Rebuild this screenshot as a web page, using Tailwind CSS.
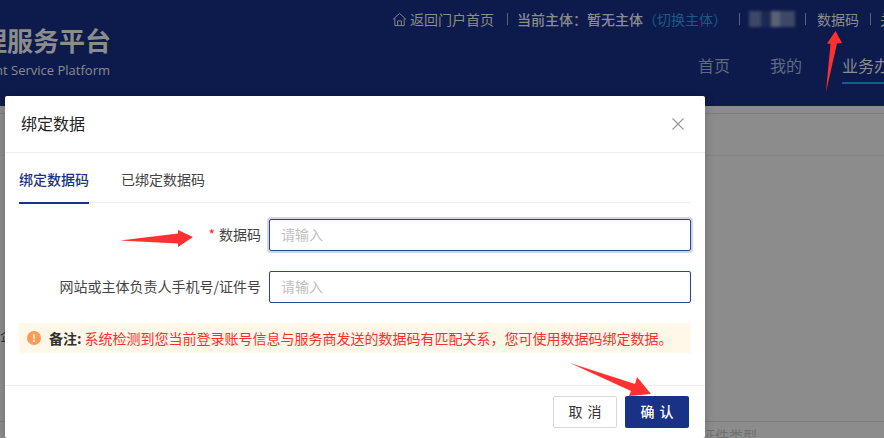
<!DOCTYPE html>
<html lang="zh-CN">
<head>
    <meta charset="UTF-8">
    <title>绑定数据</title>
    <script src="https://cdn.jsdelivr.net/npm/@tailwindcss/browser@4"></script>
</head>
<body class="font-['Noto_Sans_CJK_SC','Noto_Sans',sans-serif] bg-[#8c8c8c]">
<div class="relative w-[884px] h-[438px] overflow-hidden">

    <!-- Page behind the mask -->
    <header class="flex h-[106px] bg-[#0d1b4c] text-[#8c8c8c]">
        <div class="w-[111px] shrink-0 pt-[22px] flex flex-col items-end overflow-hidden">
            <div class="text-[26px] leading-[36px] font-bold whitespace-nowrap">理服务平台</div>
            <div class="mt-[3px] pr-[1px] text-[13px] leading-[18px] whitespace-nowrap font-['Open_Sans',sans-serif]">nt Service Platform</div>
        </div>
        <div class="ml-[281px] grow min-w-0">
            <div class="flex items-center h-[20px] mt-[9px] text-[14px] leading-[20px] whitespace-nowrap">
                <svg class="w-[15px] h-[15px] mr-[3px] shrink-0" viewBox="0 0 16 16" fill="none" stroke="#8c8c8c" stroke-width="1">
                    <path d="M1 8 8 1.5 15 8M3 7v7.5h10V7M6 14.5V9.5h4v5"/>
                </svg>
                <span class="shrink-0">返回门户首页</span>
                <span class="shrink-0 w-px h-[12px] bg-[#5a6078] ml-[13px] mr-[9px]"></span>
                <span class="shrink-0 font-medium">当前主体：暂无主体</span>
                <span class="shrink-0 text-[#1a5a8a]">（切换主体）</span>
                <span class="shrink-0 w-px h-[12px] bg-[#5a6078] ml-[12px] mr-[9px]"></span>
                <span class="shrink-0 flex w-[46px] h-[16px] blur-[1.5px]">
                    <span class="w-[12px] bg-[#3d4767]"></span>
                    <span class="w-[10px] bg-[#1c2955]"></span>
                    <span class="w-[9px] bg-[#5c6276]"></span>
                    <span class="w-[15px] bg-[#3d4767]"></span>
                </span>
                <span class="shrink-0 w-px h-[12px] bg-[#5a6078] ml-[10px] mr-[11px]"></span>
                <span class="shrink-0">数据码</span>
                <span class="shrink-0 w-px h-[12px] bg-[#5a6078] ml-[11px] mr-[9px]"></span>
                <span class="shrink-0">关</span>
            </div>
            <nav class="flex mt-[24px] ml-[306px] text-[16px] leading-[24px] whitespace-nowrap">
                <span class="mr-[40px] text-[#5f6a7f]">首页</span>
                <span class="mr-[40px] text-[#5f6a7f]">我的</span>
                <span class="border-b-[2px] border-[#1a5a8a] h-[31px] pb-[5px]">业务办理</span>
            </nav>
        </div>
    </header>
    <div class="h-[8px] border-b border-[#7c7c7c]"></div>
    <div class="h-[42px] border-b border-[#848484]"></div>
    <div class="h-[265px]"></div>
    <div class="border-t border-[#7c7c7c] pl-[701px] pt-[3px] text-[14px] leading-[20px] text-[#6f6f6f]">证件类型</div>
    <div class="absolute left-0 top-[325px] text-[14px] leading-[20px] text-[#333]">企</div>

    <!-- Dialog -->
    <div class="absolute left-[5px] top-[96px] w-[700px] h-[342px] bg-white rounded-[2px] flex flex-col shadow-[0_0_10px_rgba(0,0,0,0.2)]">
        <div class="h-[57px] shrink-0 border-b border-[#eeeeee] flex items-center justify-between pl-[16px] pr-[20px]">
            <span class="text-[16px] leading-[24px] text-[#222] -translate-y-px">绑定数据</span>
            <svg class="w-[14px] h-[14px]" viewBox="0 0 14 14" fill="none" stroke="#9a9a9a" stroke-width="1.2">
                <path d="M1.5 1.5 12.5 12.5M12.5 1.5 1.5 12.5"/>
            </svg>
        </div>

        <div class="grow px-[14px]">
            <div class="flex border-b border-[#eeeeee] h-[50px] text-[14px] leading-[20px]">
                <span class="w-[70px] pt-[16px] h-[51px] border-b-[2px] border-[#1a3285] text-[#1a3285] font-medium text-center whitespace-nowrap">绑定数据码</span>
                <span class="ml-[32px] pt-[16px] text-[#444] whitespace-nowrap">已绑定数据码</span>
            </div>

            <div class="flex items-center mt-[16px] h-[32px]">
                <label class="w-[242px] pb-[2px] text-right text-[14px] text-[#444] whitespace-nowrap"><span class="text-[#f5222d] mr-[4px]">*</span>数据码</label>
                <div class="ml-[8px] grow h-[32px] border border-[#2a4590] rounded-[2px] shadow-[0_0_0_2px_rgba(26,50,133,0.2)] px-[11px] pb-[2px] flex items-center text-[14px] text-[#c0c0c0]">请输入</div>
            </div>
            <div class="flex items-center mt-[20px] h-[32px]">
                <label class="w-[242px] pb-[2px] text-right text-[14px] text-[#444] whitespace-nowrap">网站或主体负责人手机号/证件号</label>
                <div class="ml-[8px] grow h-[32px] border border-[#2a4590] rounded-[2px] px-[11px] pb-[2px] flex items-center text-[14px] text-[#c0c0c0]">请输入</div>
            </div>

            <div class="flex items-center mt-[20px] h-[30px] bg-[#fff8e9] pl-[8px] text-[14px] whitespace-nowrap">
                <span class="w-[14px] h-[14px] rounded-full bg-[#ff9a52] text-white text-[10px] leading-[14px] font-bold text-center shrink-0">!</span>
                <span class="ml-[8px] font-bold text-[#333]">备注:</span>
                <span class="ml-[3px] text-[#ff2d2d]">系统检测到您当前登录账号信息与服务商发送的数据码有匹配关系，您可使用数据码绑定数据。</span>
            </div>
        </div>

        <div class="h-[53px] shrink-0 border-t border-[#eeeeee] flex justify-end gap-[8px] pt-[10px] pr-[16px]">
            <button class="w-[64px] h-[32px] pb-[2px] pl-[5px] border border-[#d9d9d9] rounded-[2px] text-[14px] text-[#333] tracking-[5px]">取消</button>
            <button class="w-[64px] h-[32px] pb-[2px] pl-[5px] bg-[#1a3285] rounded-[2px] text-[14px] text-white font-medium tracking-[5px]">确认</button>
        </div>
    </div>

    <!-- Annotation arrows -->
    <svg class="absolute left-0 top-0 w-[884px] h-[438px] pointer-events-none" viewBox="0 0 884 438" fill="#ff3030">
        <path d="M826 92 830.5 44 827 43.5 835.5 31 842 43 837 43.5Z"/>
        <path d="M120 240.5 178 233.5 178 230 193 237 178 247 178 243.5Z"/>
        <path d="M570 363 635 384 637 377 651 394 629 396 631 391Z"/>
    </svg>
</div>
</body>
</html>
